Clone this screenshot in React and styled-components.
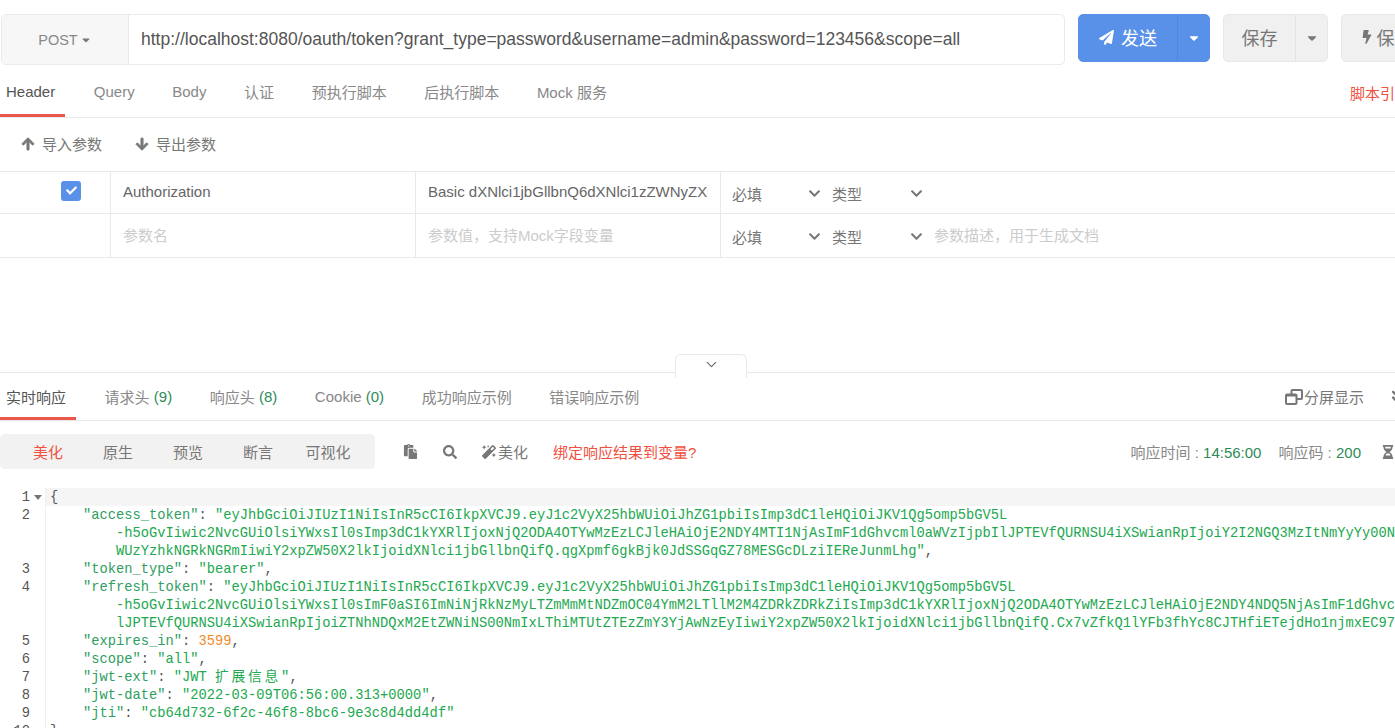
import React from 'react';
import styled, { createGlobalStyle } from 'styled-components';
import { ChevronDown } from 'lucide-react';
import {
  FaPaperPlane,
  FaArrowUp,
  FaArrowDown,
  FaBolt,
  FaCheck,
  FaSearch,
  FaMagic,
  FaPaste,
  FaHourglassHalf,
  FaAngleDoubleDown,
  FaChevronDown,
  FaCaretDown,
} from 'react-icons/fa';

const GlobalStyle = createGlobalStyle`
  html, body {
    margin: 0;
    padding: 0;
    background: #fff;
    overflow: hidden;
  }
  body {
    font-family: "Liberation Sans", "Noto Sans CJK SC", sans-serif;
    font-size: 15px;
    color: #666;
  }
`;

const requestTabs = ['Header', 'Query', 'Body', '认证', '预执行脚本', '后执行脚本', 'Mock 服务'];

const responseTabs = [
  { label: '实时响应' },
  { label: '请求头', count: '(9)' },
  { label: '响应头', count: '(8)' },
  { label: 'Cookie', count: '(0)' },
  { label: '成功响应示例' },
  { label: '错误响应示例' },
];

const viewModes = ['美化', '原生', '预览', '断言', '可视化'];

const Q = '"';

const SplitIcon = () => (
  <svg width="18" height="16" viewBox="0 0 18 16" fill="none" stroke="#777">
    <rect x="6.5" y="1" width="10.5" height="9" rx="1" strokeWidth="2" />
    <rect x="1" y="5.5" width="10.5" height="9.5" rx="1" strokeWidth="2" fill="#fff" />
    <rect x="1" y="5" width="10.5" height="2.5" fill="#777" stroke="none" />
  </svg>
);

function App() {
  return (
    <Page>
      <GlobalStyle />
      <UrlRow>
        <UrlBox>
          <Method>
            POST
            <FaCaretDown size={12} />
          </Method>
          <UrlText>
            http://localhost:8080/oauth/token?grant_type=password&amp;username=admin&amp;password=123456&amp;scope=all
          </UrlText>
        </UrlBox>
        <SplitButton $primary>
          <ButtonMain $width={98} $gap={7} $primary>
            <FaPaperPlane size={15} />
            发送
          </ButtonMain>
          <ButtonArrow $primary>
            <FaCaretDown size={14} />
          </ButtonArrow>
        </SplitButton>
        <SplitButton>
          <ButtonMain $width={71} $gap={7}>
            保存
          </ButtonMain>
          <ButtonArrow>
            <FaCaretDown size={14} />
          </ButtonArrow>
        </SplitButton>
        <SplitButton>
          <ButtonMain $width={88} $gap={3}>
            <FaBolt size={14} />
            保存
          </ButtonMain>
        </SplitButton>
      </UrlRow>

      <RequestTabs>
        <TabList>
          {requestTabs.map((t, i) => (
            <Tab key={t} $active={i === 0}>
              {t}
            </Tab>
          ))}
        </TabList>
        <ScriptLink>脚本引用</ScriptLink>
      </RequestTabs>

      <ActionRow>
        <ActionItem>
          <FaArrowUp size={14} />
          导入参数
        </ActionItem>
        <ActionItem>
          <FaArrowDown size={14} />
          导出参数
        </ActionItem>
      </ActionRow>

      <ParamTable>
        <ParamRow $height={42}>
          <CheckCell>
            <CheckBox>
              <FaCheck size={11} />
            </CheckBox>
          </CheckCell>
          <ParamCell>
            <CellValue>Authorization</CellValue>
          </ParamCell>
          <ParamCell>
            <CellValue>Basic dXNlci1jbGllbnQ6dXNlci1zZWNyZXQ=</CellValue>
          </ParamCell>
          <SelectCell>
            <SelectBox $width={100}>
              必填
              <FaChevronDown size={13} />
            </SelectBox>
            <SelectBox $width={102}>
              类型
              <FaChevronDown size={13} />
            </SelectBox>
          </SelectCell>
        </ParamRow>
        <ParamRow $height={44}>
          <CheckCell />
          <ParamCell $placeholder>
            <CellValue>参数名</CellValue>
          </ParamCell>
          <ParamCell $placeholder>
            <CellValue>参数值，支持Mock字段变量</CellValue>
          </ParamCell>
          <SelectCell>
            <SelectBox $width={100}>
              必填
              <FaChevronDown size={13} />
            </SelectBox>
            <SelectBox $width={102}>
              类型
              <FaChevronDown size={13} />
            </SelectBox>
            <DescHint>参数描述，用于生成文档</DescHint>
          </SelectCell>
        </ParamRow>
      </ParamTable>

      <Spacer>
        <CollapseHandle>
          <ChevronDown size={17} strokeWidth={1.6} />
        </CollapseHandle>
      </Spacer>

      <ResponseTabs>
        <TabList>
          {responseTabs.map((t, i) => (
            <Tab key={t.label} $active={i === 0}>
              {t.label}
              {t.count && <Count> {t.count}</Count>}
            </Tab>
          ))}
        </TabList>
        <ResponseTools>
          <SplitView>
            <SplitIcon />
            分屏显示
          </SplitView>
          <FaAngleDoubleDown size={15} />
        </ResponseTools>
      </ResponseTabs>

      <ResultBar>
        <ModeGroup>
          {viewModes.map((m, i) => (
            <Mode key={m} $active={i === 0}>
              {m}
            </Mode>
          ))}
        </ModeGroup>
        <ToolIcon>
          <FaPaste size={15} />
        </ToolIcon>
        <ToolIcon>
          <FaSearch size={14} />
        </ToolIcon>
        <ToolIcon>
          <FaMagic size={14} />
          美化
        </ToolIcon>
        <BindLink>绑定响应结果到变量?</BindLink>
        <ResultStats>
          <Stat>
            响应时间 : <Green>14:56:00</Green>
          </Stat>
          <Stat>
            响应码 : <Green>200</Green>
          </Stat>
          <FaHourglassHalf size={14} />
        </ResultStats>
      </ResultBar>

      <Editor>
        <CodeLine n={1} $current fold>
          <Punct>{'{'}</Punct>
        </CodeLine>
        <CodeLine n={2} indent>
          <Key>{Q}access_token{Q}</Key>
          <Punct>: </Punct>
          <Str>{Q}eyJhbGciOiJIUzI1NiIsInR5cCI6IkpXVCJ9.eyJ1c2VyX25hbWUiOiJhZG1pbiIsImp3dC1leHQiOiJKV1Qg5omp5bGV5L</Str>
        </CodeLine>
        <CodeLine wrapped>
          <Str>-h5oGvIiwic2NvcGUiOlsiYWxsIl0sImp3dC1kYXRlIjoxNjQ2ODA4OTYwMzEzLCJleHAiOjE2NDY4MTI1NjAsImF1dGhvcml0aWVzIjpbIlJPTEVfQURNSU4iXSwianRpIjoiY2I2NGQ3MzItNmYyYy00NmY4</Str>
        </CodeLine>
        <CodeLine wrapped>
          <Str>WUzYzhkNGRkNGRmIiwiY2xpZW50X2lkIjoidXNlci1jbGllbnQifQ.qgXpmf6gkBjk0JdSSGqGZ78MESGcDLziIEReJunmLhg{Q}</Str>
          <Punct>,</Punct>
        </CodeLine>
        <CodeLine n={3} indent>
          <Key>{Q}token_type{Q}</Key>
          <Punct>: </Punct>
          <Str>{Q}bearer{Q}</Str>
          <Punct>,</Punct>
        </CodeLine>
        <CodeLine n={4} indent>
          <Key>{Q}refresh_token{Q}</Key>
          <Punct>: </Punct>
          <Str>{Q}eyJhbGciOiJIUzI1NiIsInR5cCI6IkpXVCJ9.eyJ1c2VyX25hbWUiOiJhZG1pbiIsImp3dC1leHQiOiJKV1Qg5omp5bGV5L</Str>
        </CodeLine>
        <CodeLine wrapped>
          <Str>-h5oGvIiwic2NvcGUiOlsiYWxsIl0sImF0aSI6ImNiNjRkNzMyLTZmMmMtNDZmOC04YmM2LTllM2M4ZDRkZDRkZiIsImp3dC1kYXRlIjoxNjQ2ODA4OTYwMzEzLCJleHAiOjE2NDY4NDQ5NjAsImF1dGhvcml0</Str>
        </CodeLine>
        <CodeLine wrapped>
          <Str>lJPTEVfQURNSU4iXSwianRpIjoiZTNhNDQxM2EtZWNiNS00NmIxLThiMTUtZTEzZmY3YjAwNzEyIiwiY2xpZW50X2lkIjoidXNlci1jbGllbnQifQ.Cx7vZfkQ1lYFb3fhYc8CJTHfiETejdHo1njmxEC97</Str>
        </CodeLine>
        <CodeLine n={5} indent>
          <Key>{Q}expires_in{Q}</Key>
          <Punct>: </Punct>
          <Num>3599</Num>
          <Punct>,</Punct>
        </CodeLine>
        <CodeLine n={6} indent>
          <Key>{Q}scope{Q}</Key>
          <Punct>: </Punct>
          <Str>{Q}all{Q}</Str>
          <Punct>,</Punct>
        </CodeLine>
        <CodeLine n={7} indent>
          <Key>{Q}jwt-ext{Q}</Key>
          <Punct>: </Punct>
          <Str>
            {Q}JWT <Wide>扩展信息</Wide>
            {Q}
          </Str>
          <Punct>,</Punct>
        </CodeLine>
        <CodeLine n={8} indent>
          <Key>{Q}jwt-date{Q}</Key>
          <Punct>: </Punct>
          <Str>{Q}2022-03-09T06:56:00.313+0000{Q}</Str>
          <Punct>,</Punct>
        </CodeLine>
        <CodeLine n={9} indent>
          <Key>{Q}jti{Q}</Key>
          <Punct>: </Punct>
          <Str>{Q}cb64d732-6f2c-46f8-8bc6-9e3c8d4dd4df{Q}</Str>
        </CodeLine>
        <CodeLine n={10}>
          <Punct>{'}'}</Punct>
        </CodeLine>
      </Editor>
    </Page>
  );
}

const CodeLine = ({ n, fold, indent, wrapped, $current, children }) => (
  <LineRow>
    <Gutter>
      {n}
      {fold && <FoldMark />}
    </Gutter>
    <LineText $current={$current} $pad={wrapped ? 8 : indent ? 4 : 0}>
      {children}
    </LineText>
  </LineRow>
);

export default App;

const Page = styled.div`
  width: 1395px;
  height: 728px;
  overflow: hidden;
  display: flex;
  flex-direction: column;
  background: #fff;
`;

const UrlRow = styled.div`
  display: flex;
  align-items: flex-start;
  gap: 13px;
  height: 50px;
  padding: 14px 0 0 1px;
  flex-shrink: 0;
`;

const UrlBox = styled.div`
  width: 1064px;
  height: 51px;
  box-sizing: border-box;
  flex-shrink: 0;
  display: flex;
  border: 1px solid #eaeaea;
  border-radius: 5px;
  overflow: hidden;
`;

const Method = styled.div`
  width: 126px;
  flex-shrink: 0;
  display: flex;
  align-items: center;
  justify-content: center;
  gap: 2px;
  background: #f7f7f7;
  border-right: 1px solid #eaeaea;
  color: #888;
  font-size: 14.5px;
  svg {
    color: #777;
  }
`;

const UrlText = styled.div`
  display: flex;
  align-items: center;
  padding-left: 12px;
  font-size: 17.5px;
  color: #555;
  white-space: nowrap;
`;

const SplitButton = styled.div`
  display: flex;
  flex-shrink: 0;
  height: 48px;
  box-sizing: border-box;
  border-radius: 5px;
  overflow: hidden;
  background: ${p => (p.$primary ? '#5a91e8' : '#f0f0f0')};
  border: 1px solid ${p => (p.$primary ? '#5a91e8' : '#e8e8e8')};
`;

const ButtonMain = styled.div`
  width: ${p => p.$width}px;
  display: flex;
  align-items: center;
  justify-content: center;
  gap: ${p => p.$gap}px;
  padding-bottom: 2px;
  font-size: 18px;
  color: ${p => (p.$primary ? '#fff' : '#777')};
`;

const ButtonArrow = styled.div`
  width: 31px;
  display: flex;
  align-items: center;
  justify-content: center;
  border-left: 1px solid ${p => (p.$primary ? '#4f86dd' : '#e4e4e4')};
  color: ${p => (p.$primary ? '#fff' : '#777')};
`;

const RequestTabs = styled.div`
  display: flex;
  justify-content: space-between;
  height: 54px;
  box-sizing: border-box;
  flex-shrink: 0;
  border-bottom: 1px solid #eaeaea;
`;

const TabList = styled.div`
  display: flex;
  gap: 26.6px;
`;

const Tab = styled.div`
  display: flex;
  align-items: center;
  white-space: pre;
  padding: 4px 5px 0 6px;
  height: 100%;
  box-sizing: border-box;
  color: ${p => (p.$active ? '#555' : '#888')};
  font-size: 15px;
  border-bottom: 3px solid ${p => (p.$active ? '#e8574a' : 'transparent')};
  margin-bottom: -1px;
  padding-right: ${p => (p.$active ? '10px' : '5px')};
  margin-right: ${p => (p.$active ? '-4px' : '0')};
`;

const ScriptLink = styled.div`
  display: flex;
  align-items: center;
  width: 45px;
  padding-top: 3px;
  white-space: nowrap;
  color: #f0503f;
  font-size: 15px;
`;

const ActionRow = styled.div`
  display: flex;
  align-items: center;
  gap: 33px;
  height: 53px;
  box-sizing: border-box;
  padding-bottom: 2px;
  flex-shrink: 0;
  padding-left: 21px;
`;

const ActionItem = styled.div`
  display: flex;
  align-items: center;
  gap: 7px;
  color: #777;
  font-size: 15px;
  svg {
    color: #777;
    stroke: currentColor;
    stroke-width: 30;
  }
`;

const ParamTable = styled.div`
  flex-shrink: 0;
  border-top: 1px solid #e9e9e9;
`;

const ParamRow = styled.div`
  display: grid;
  grid-template-columns: 110px 305px 305px 1fr;
  height: ${p => p.$height}px;
  box-sizing: border-box;
  border-bottom: 1px solid #e9e9e9;
`;

const CheckCell = styled.div`
  display: flex;
  align-items: center;
  justify-content: center;
  padding-left: 42px;
  padding-right: 10px;
  padding-bottom: 4px;
`;

const CheckBox = styled.div`
  width: 20px;
  height: 20px;
  border-radius: 3px;
  background: #5a91e8;
  color: #fff;
  display: flex;
  align-items: center;
  justify-content: center;
`;

const ParamCell = styled.div`
  border-left: 1px solid #e9e9e9;
  padding: 0 12px 2px;
  display: flex;
  align-items: center;
  min-width: 0;
  font-size: 15px;
  color: ${p => (p.$placeholder ? '#ccc' : '#666')};
`;

const CellValue = styled.div`
  white-space: nowrap;
  overflow: hidden;
`;

const SelectCell = styled.div`
  border-left: 1px solid #e9e9e9;
  padding-left: 11px;
  display: flex;
  align-items: center;
  padding-top: 2px;
`;

const SelectBox = styled.div`
  width: ${p => p.$width}px;
  display: flex;
  align-items: center;
  justify-content: space-between;
  padding-right: 11px;
  box-sizing: border-box;
  font-size: 15px;
  color: #777;
  svg {
    color: #777;
  }
`;

const DescHint = styled.div`
  color: #ccc;
  font-size: 15px;
  margin-top: -4px;
`;

const Spacer = styled.div`
  position: relative;
  height: 114px;
  flex-shrink: 0;
`;

const CollapseHandle = styled.div`
  position: absolute;
  left: 675px;
  bottom: -6px;
  width: 72px;
  height: 24px;
  box-sizing: border-box;
  background: #fff;
  border: 1px solid #e9e9e9;
  border-bottom: none;
  border-radius: 6px 6px 0 0;
  display: flex;
  justify-content: center;
  padding-top: 1px;
  color: #666;
  z-index: 1;
`;

const ResponseTabs = styled.div`
  display: flex;
  justify-content: space-between;
  height: 49px;
  box-sizing: border-box;
  flex-shrink: 0;
  border-top: 1px solid #e9e9e9;
  border-bottom: 1px solid #e9e9e9;
  ${Tab} {
    padding-top: 2px;
  }
`;

const Count = styled.span`
  color: #2e8b57;
`;

const ResponseTools = styled.div`
  display: flex;
  align-items: center;
  gap: 25px;
  margin-right: -9px;
  flex-shrink: 0;
  color: #777;
`;

const SplitView = styled.div`
  display: flex;
  align-items: center;
  gap: 1px;
  font-size: 15px;
  color: #777;
`;

const ResultBar = styled.div`
  display: flex;
  align-items: center;
  height: 67px;
  box-sizing: border-box;
  flex-shrink: 0;
  padding-bottom: 6px;
`;

const ModeGroup = styled.div`
  display: flex;
  width: 375px;
  height: 35px;
  box-sizing: border-box;
  padding-left: 13px;
  padding-bottom: 1px;
  border-radius: 5px;
  background: #f2f2f2;
  margin-right: 28px;
  flex-shrink: 0;
`;

const Mode = styled.div`
  width: 70px;
  display: flex;
  align-items: center;
  justify-content: center;
  font-size: 15px;
  color: ${p => (p.$active ? '#f0503f' : '#777')};
`;

const ToolIcon = styled.div`
  display: flex;
  align-items: center;
  gap: 2px;
  margin-right: 25px;
  font-size: 15px;
  color: #777;
`;

const BindLink = styled.div`
  color: #f0503f;
  font-size: 15px;
  white-space: nowrap;
`;

const ResultStats = styled.div`
  margin-left: auto;
  display: flex;
  align-items: center;
  gap: 17px;
  color: #888;
  font-size: 15px;
  flex-shrink: 0;
  svg {
    color: #777;
    margin-left: 3px;
  }
`;

const Stat = styled.div`
  white-space: pre;
`;

const Green = styled.span`
  color: #2e8b57;
`;

const Editor = styled.div`
  flex: 1;
  min-height: 0;
  overflow: hidden;
  font-family: "Liberation Mono", "Noto Sans CJK SC", monospace;
  font-size: 13.75px;
`;

const LineRow = styled.div`
  display: flex;
  height: 18px;
  line-height: 20px;
`;

const Gutter = styled.div`
  position: relative;
  width: 46px;
  box-sizing: border-box;
  flex-shrink: 0;
  padding-right: 15px;
  text-align: right;
  color: #555;
  border-right: 1px solid #f0f0f0;
`;

const FoldMark = styled.span`
  position: absolute;
  left: 34px;
  top: 7px;
  width: 0;
  height: 0;
  border-left: 4px solid transparent;
  border-right: 4px solid transparent;
  border-top: 5px solid #777;
`;

const LineText = styled.div`
  flex: 1;
  min-width: 0;
  white-space: pre;
  padding-left: ${p => 4 + p.$pad * 8.25}px;
  background: ${p => (p.$current ? '#f5f5f5' : 'transparent')};
`;

const Key = styled.span`
  color: #2f9e5f;
`;

const Str = styled.span`
  color: #22a84f;
`;

const Num = styled.span`
  color: #f08a2c;
`;

const Punct = styled.span`
  color: #555;
`;

const Wide = styled.span`
  letter-spacing: 2.75px;
`;
